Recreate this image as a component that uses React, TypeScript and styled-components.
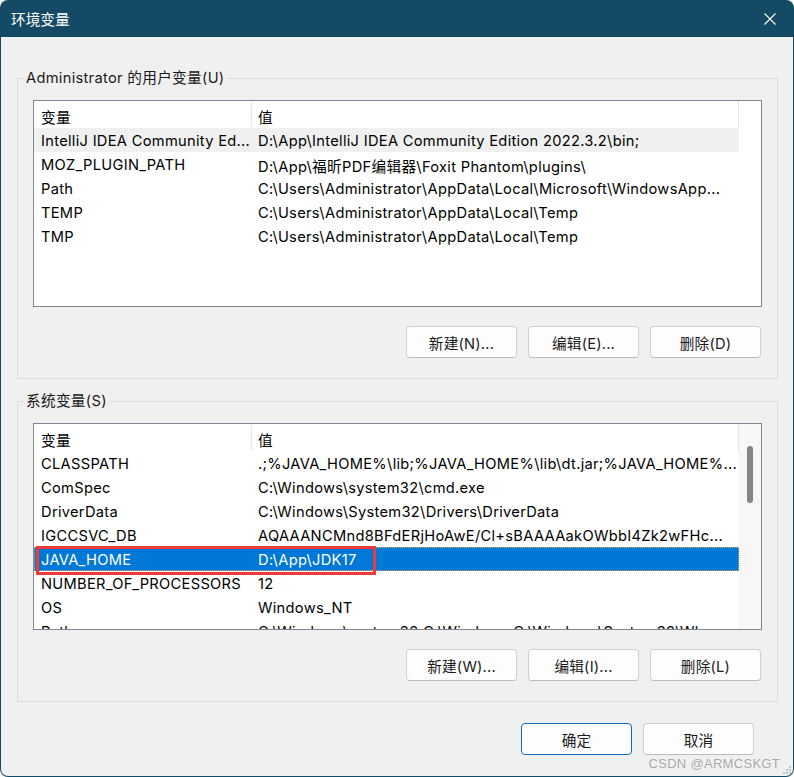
import React from "react";
import styled, { createGlobalStyle } from "styled-components";

const FONT = `Inter, "Noto Sans CJK SC", sans-serif`;

const GlobalStyle = createGlobalStyle`
  html, body {
    margin: 0;
    padding: 0;
    background: #ffffff;
  }
  body {
    font-family: ${FONT};
    font-size: 14.67px;
    letter-spacing: 0.3px;
    color: #000;
  }
`;

const Window = styled.div`
  position: relative;
  width: 794px;
  height: 777px;
  box-sizing: border-box;
  background: #154a67;
  border-radius: 8px;
  overflow: hidden;
  display: flex;
  flex-direction: column;
`;

const TitleBar = styled.div`
  height: 37px;
  flex: none;
  display: flex;
  align-items: center;
  justify-content: space-between;
  padding-left: 11px;
  color: #ffffff;
  font-size: 14.67px;
  letter-spacing: 0;
`;

const CloseButton = styled.div`
  width: 46px;
  height: 37px;
  display: flex;
  align-items: center;
  justify-content: center;
  margin-right: 1px;
`;

const Body = styled.div`
  flex: 1;
  margin: 0 1px 1px 1px;
  background: #f0f0f0;
  border-radius: 0 0 7px 7px;
  padding: 31px 0 0 16px;
  display: flex;
  flex-direction: column;
`;

const Group = styled.fieldset<{ gapTop?: number }>`
  width: 761px;
  box-sizing: border-box;
  margin: ${(p) => p.gapTop ?? 0}px 0 0 0;
  padding: 0 15px 20px 15px;
  border: 1px solid #dcdcdc;
  min-inline-size: 0;
`;

const Legend = styled.legend`
  margin-left: -9px;
  padding: 0 2px;
  font-size: 14.67px;
  line-height: 20px;
  color: #1a1a1a;
`;

const ListBox = styled.div`
  margin-top: 12px;
  width: 729px;
  height: 207px;
  box-sizing: border-box;
  border: 1px solid #828790;
  background: #ffffff;
  display: flex;
  overflow: hidden;
`;

const Table = styled.div`
  position: relative;
  width: 705px;
  flex: none;
`;

const HeaderRow = styled.div`
  display: grid;
  grid-template-columns: 218px 1fr;
  height: 27px;
  border-right: 1px solid #e5e5e5;
`;

const HeaderCell = styled.div<{ first?: boolean }>`
  display: flex;
  align-items: center;
  padding: 3px 0 0 ${(p) => (p.first ? 7 : 6)}px;
  border-right: ${(p) => (p.first ? "1px solid #e5e5e5" : "none")};
  margin: 1px 0 1px 0;
`;

const Row = styled.div<{ tone?: "hover" | "selected" }>`
  display: grid;
  grid-template-columns: 218px 1fr;
  height: 24px;
  box-sizing: border-box;
  background: ${(p) =>
    p.tone === "selected" ? "#0078d7" : p.tone === "hover" ? "#f0f0f0" : "transparent"};
  color: ${(p) => (p.tone === "selected" ? "#ffffff" : "#000000")};
  outline: ${(p) => (p.tone === "selected" ? "1px dotted #e8a35a" : "none")};
  outline-offset: -1px;
`;

const Cell = styled.div<{ first?: boolean }>`
  display: flex;
  align-items: center;
  padding: 2px 0 0 ${(p) => (p.first ? 7 : 6)}px;
  white-space: nowrap;
  overflow: hidden;
`;

const ScrollArea = styled.div<{ track?: boolean }>`
  flex: 1;
  position: relative;
  background: ${(p) => (p.track ? "#f7f7f7" : "#ffffff")};
  display: flex;
  justify-content: center;
  padding-top: 22px;
`;

const Thumb = styled.div`
  width: 6px;
  height: 57px;
  border-radius: 3px;
  background: #858585;
`;

const Marker = styled.div`
  position: absolute;
  left: 2px;
  top: 122px;
  width: 340px;
  height: 29px;
  box-sizing: border-box;
  border: 3px solid #ef3a3a;
  pointer-events: none;
`;

const ButtonRow = styled.div<{ top: number; right?: number }>`
  display: flex;
  justify-content: flex-end;
  gap: 11px;
  margin-top: ${(p) => p.top}px;
  padding-right: ${(p) => p.right ?? 1}px;
`;

const Button = styled.button<{ primary?: boolean }>`
  width: 111px;
  height: 32px;
  box-sizing: border-box;
  border-radius: 4px;
  border: 1px solid ${(p) => (p.primary ? "#0f6cbd" : "#d0d0d0")};
  border-bottom-color: ${(p) => (p.primary ? "#0f6cbd" : "#bcbcbc")};
  background: #fdfdfd;
  font-family: ${FONT};
  font-size: 14.67px;
  letter-spacing: 0.2px;
  color: #1a1a1a;
  padding: 1px 0 0 0;
`;

const Watermark = styled.div`
  position: absolute;
  right: 14px;
  bottom: 6px;
  font-family: "Liberation Sans", Arial, sans-serif;
  font-size: 13px;
  letter-spacing: 0.3px;
  color: #a8a8a8;
  text-shadow: 0 0 2px #ffffff;
`;

const Grip = styled.svg`
  position: absolute;
  right: 2px;
  bottom: 2px;
`;

type Entry = { name: string; value: string; tone?: "hover" | "selected" };

const userVars: Entry[] = [
  {
    name: "IntelliJ IDEA Community Ed...",
    value: "D:\\App\\IntelliJ IDEA Community Edition 2022.3.2\\bin;",
    tone: "hover",
  },
  { name: "MOZ_PLUGIN_PATH", value: "D:\\App\\福昕PDF编辑器\\Foxit Phantom\\plugins\\" },
  {
    name: "Path",
    value: "C:\\Users\\Administrator\\AppData\\Local\\Microsoft\\WindowsApp...",
  },
  { name: "TEMP", value: "C:\\Users\\Administrator\\AppData\\Local\\Temp" },
  { name: "TMP", value: "C:\\Users\\Administrator\\AppData\\Local\\Temp" },
];

const systemVars: Entry[] = [
  {
    name: "CLASSPATH",
    value: ".;%JAVA_HOME%\\lib;%JAVA_HOME%\\lib\\dt.jar;%JAVA_HOME%...",
  },
  { name: "ComSpec", value: "C:\\Windows\\system32\\cmd.exe" },
  { name: "DriverData", value: "C:\\Windows\\System32\\Drivers\\DriverData" },
  {
    name: "IGCCSVC_DB",
    value: "AQAAANCMnd8BFdERjHoAwE/Cl+sBAAAAakOWbbI4Zk2wFHc...",
  },
  { name: "JAVA_HOME", value: "D:\\App\\JDK17", tone: "selected" },
  { name: "NUMBER_OF_PROCESSORS", value: "12" },
  { name: "OS", value: "Windows_NT" },
  { name: "Path", value: "C:\\Windows\\system32;C:\\Windows;C:\\Windows\\System32\\Wbem;..." },
];

const VarList = ({
  rows,
  scroll,
  marked,
}: {
  rows: Entry[];
  scroll?: boolean;
  marked?: boolean;
}) => (
  <ListBox>
    <Table>
      <HeaderRow>
        <HeaderCell first>变量</HeaderCell>
        <HeaderCell>值</HeaderCell>
      </HeaderRow>
      {rows.map((r, i) => (
        <Row key={i} tone={r.tone}>
          <Cell first>{r.name}</Cell>
          <Cell>{r.value}</Cell>
        </Row>
      ))}
      {marked && <Marker />}
    </Table>
    <ScrollArea track={scroll}>{scroll && <Thumb />}</ScrollArea>
  </ListBox>
);

const App = () => {
  return (
    <>
      <GlobalStyle />
      <Window>
        <TitleBar>
          <span>环境变量</span>
          <CloseButton>
            <svg width="12" height="12" viewBox="0 0 12 12">
              <path d="M0.5 0.5 L11.5 11.5 M11.5 0.5 L0.5 11.5" stroke="#ffffff" strokeWidth="1.1" />
            </svg>
          </CloseButton>
        </TitleBar>
        <Body>
          <Group>
            <Legend>Administrator 的用户变量(U)</Legend>
            <VarList rows={userVars} />
            <ButtonRow top={19}>
              <Button>新建(N)...</Button>
              <Button>编辑(E)...</Button>
              <Button>删除(D)</Button>
            </ButtonRow>
          </Group>
          <Group gapTop={12}>
            <Legend>系统变量(S)</Legend>
            <VarList rows={systemVars} scroll marked />
            <ButtonRow top={19}>
              <Button>新建(W)...</Button>
              <Button>编辑(I)...</Button>
              <Button>删除(L)</Button>
            </ButtonRow>
          </Group>
          <ButtonRow top={21} right={39}>
            <Button primary>确定</Button>
            <Button>取消</Button>
          </ButtonRow>
        </Body>
        <Watermark>CSDN @ARMCSKGT</Watermark>
        <Grip width="10" height="10" viewBox="0 0 10 10">
          <rect x="7" y="1" width="2" height="2" fill="#c4c4c4" />
          <rect x="4" y="4" width="2" height="2" fill="#c4c4c4" />
          <rect x="7" y="4" width="2" height="2" fill="#c4c4c4" />
          <rect x="1" y="7" width="2" height="2" fill="#c4c4c4" />
          <rect x="4" y="7" width="2" height="2" fill="#c4c4c4" />
          <rect x="7" y="7" width="2" height="2" fill="#c4c4c4" />
        </Grip>
      </Window>
    </>
  );
};

export default App;
